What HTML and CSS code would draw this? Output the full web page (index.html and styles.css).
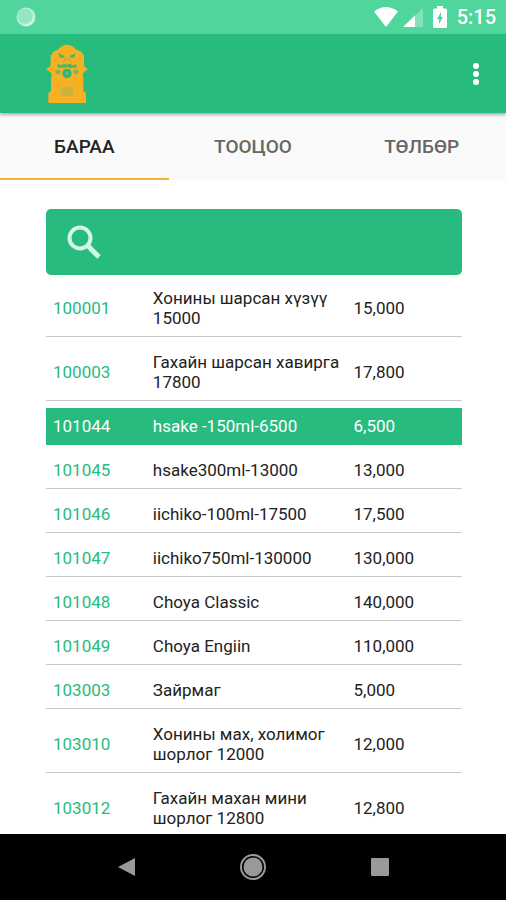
FILE: index.html
```html
<!DOCTYPE html>
<html lang="mn">
<head>
    <meta charset="UTF-8">
    <meta name="viewport" content="width=device-width, initial-scale=1.0">
    <title>Бараа</title>
    <link rel="stylesheet" href="styles.css">
</head>
<body>
    <!-- Status bar -->
    <div class="status-bar">
        <svg class="status-dot" width="20" height="20" viewBox="0 0 20 20">
            <circle cx="10" cy="10" r="9.5" fill="#fff" fill-opacity="0.6"/>
            <circle cx="9" cy="9" r="7.5" fill="#50d69c" fill-opacity="0.35"/>
            <path d="M18.500 8Q18 17 8 18.500A9.500 9.500 0 0 0 18.500 8z" fill="#fff" fill-opacity="0.8"/>
        </svg>
        <div class="status-icons">
            <svg width="26" height="22" viewBox="0 0 26 22">
                <path d="M1 5.500Q13-3.500 25 5.500L13 21z" fill="#fff"/>
            </svg>
            <svg width="20" height="22" viewBox="0 0 20 22">
                <path d="M0 21L20 2v19z" fill="#fff" fill-opacity="0.3"/>
                <path d="M0 21L12 9.500V21z" fill="#fff"/>
            </svg>
            <svg class="battery" width="14" height="22" viewBox="0 0 14 22">
                <path d="M4 2.500V0h6v2.500h2.500Q14 2.500 14 4v16.500q0 1.500-1.500 1.500h-11Q0 22 0 20.500V4Q0 2.500 1.500 2.500z" fill="#fff"/>
                <path d="M8 6v5h2L6 18v-5H4z" fill="#50d69c"/>
            </svg>
            <span class="time">5:15</span>
        </div>
    </div>

    <!-- App bar -->
    <header class="app-bar">
        <a href="#" class="logo" aria-label="Home">
            <svg width="42" height="62" viewBox="6 6 126 186">
                <path d="M28 32l14-6Q54 11 69 11t28 15l15 6 8 12v26l2 8 10 6-10 8-6 6 2 16v36l8 6v30H13v-30l8-6v-36l2-16-6-6-11-8 12-8 2-8V44z" fill="#f7b023"/>
                <g fill="#48b96c">
                    <path d="M42 36l20 9-4 5H48zM96 36l-20 9 4 5h10z"/>
                    <path d="M42 69l9 4 9-5 9 3 9-3 9 5 9-4 2 9-6 4-7-3-6 3-10-4-10 4-6-3-7 3-6-4z"/>
                </g>
                <path d="M66 48l-6 10 9-3 9 3-6-10M54 66l6-6M84 66l-6-6" fill="none" stroke="#b0b044" stroke-width="3"/>
                <g fill="#7cb65a">
                    <path d="M34 86h12l4 5-4 9H36zM104 86H92l-4 5 4 9h10z"/>
                </g>
                <circle cx="69" cy="97" r="14" fill="#27bb7d"/>
                <circle cx="69" cy="97" r="3.500" fill="#a9b548"/>
                <path d="M50 137h38v29H50z" fill="#d3b23c"/>
                <path d="M56 140v24M63 140v24M70 140v24M77 140v24M84 140v24" stroke="#bdb54a" stroke-width="3"/>
            </svg>
        </a>
        <button class="menu-btn" aria-label="Menu">
            <svg width="8" height="24" viewBox="0 0 8 24" fill="#fff">
                <circle cx="4" cy="4" r="3"/>
                <circle cx="4" cy="12" r="3"/>
                <circle cx="4" cy="20" r="3"/>
            </svg>
        </button>
    </header>

    <nav class="tabs">
        <a href="#products" class="active">БАРАА</a>
        <a href="#bill">ТООЦОО</a>
        <a href="#payment">ТӨЛБӨР</a>
    </nav>

    <!-- Product list -->
    <main class="content" id="products">
        <label class="search">
            <svg width="36" height="36" viewBox="0 0 36 36" fill="none" stroke="#d5f5e6">
                <circle cx="14" cy="14" r="10.500" stroke-width="4"/>
                <path d="M21.500 21.500L33 33" stroke-width="5"/>
            </svg>
            <input type="search" aria-label="Хайх">
        </label>

        <table class="products">
            <tbody>
                <tr><td class="code">100001</td><td class="name">Хонины шарсан хүзүү 15000</td><td class="price">15,000</td></tr>
                <tr><td class="code">100003</td><td class="name">Гахайн шарсан хавирга 17800</td><td class="price">17,800</td></tr>
                <tr class="selected"><td class="code">101044</td><td class="name">hsake -150ml-6500</td><td class="price">6,500</td></tr>
                <tr><td class="code">101045</td><td class="name">hsake300ml-13000</td><td class="price">13,000</td></tr>
                <tr><td class="code">101046</td><td class="name">iichiko-100ml-17500</td><td class="price">17,500</td></tr>
                <tr><td class="code">101047</td><td class="name">iichiko750ml-130000</td><td class="price">130,000</td></tr>
                <tr><td class="code">101048</td><td class="name">Choya Classic</td><td class="price">140,000</td></tr>
                <tr><td class="code">101049</td><td class="name">Choya Engiin</td><td class="price">110,000</td></tr>
                <tr><td class="code">103003</td><td class="name">Зайрмаг</td><td class="price">5,000</td></tr>
                <tr><td class="code">103010</td><td class="name">Хонины мах, холимог шорлог 12000</td><td class="price">12,000</td></tr>
                <tr><td class="code">103012</td><td class="name">Гахайн махан мини шорлог 12800</td><td class="price">12,800</td></tr>
            </tbody>
        </table>
    </main>

    <!-- System navigation -->
    <footer class="nav-bar">
        <button aria-label="Back">
            <svg width="26" height="26" viewBox="0 0 26 26"><path d="M4 13L21 4v18z" fill="#999"/></svg>
        </button>
        <button aria-label="Home">
            <svg width="26" height="26" viewBox="0 0 26 26">
                <circle cx="13" cy="13" r="12" fill="none" stroke="#999" stroke-width="2"/>
                <circle cx="13" cy="13" r="9.500" fill="#999"/>
            </svg>
        </button>
        <button aria-label="Recent apps">
            <svg width="26" height="26" viewBox="0 0 26 26"><rect x="4" y="4" width="18" height="18" rx="1" fill="#999"/></svg>
        </button>
    </footer>
</body>
</html>
```

FILE: styles.css
```css
/* General Styles */
* {
    box-sizing: border-box;
}

body {
    font-family: Roboto, "Noto Sans", sans-serif;
    margin: 0;
    height: 100vh;
    display: flex;
    flex-direction: column;
    background-color: white;
    color: #222;
}

svg {
    display: block;
}

button {
    display: flex;
    align-items: center;
    justify-content: center;
    background: none;
    border: none;
    padding: 0;
    cursor: pointer;
}

/* Status bar */
.status-bar {
    flex: none;
    height: 34px;
    display: flex;
    justify-content: space-between;
    align-items: center;
    padding: 0 10px 0 16px;
    background-color: #50d69c;
    color: white;
}

.status-icons {
    display: flex;
    align-items: center;
    gap: 4px;
}

.battery {
    margin: 0 6px;
}

.time {
    font-size: 20px;
    font-weight: 500;
    line-height: 24px;
}

/* App bar */
.app-bar {
    flex: none;
    height: 79px;
    display: flex;
    justify-content: space-between;
    align-items: center;
    padding: 0 16px 0 46px;
    background-color: #27bb7d;
    box-shadow: 0 2px 3px rgba(0, 0, 0, 0.3);
    z-index: 1;
}

.menu-btn {
    width: 28px;
    height: 40px;
}

/* Tabs */
.tabs {
    flex: none;
    display: flex;
    background-color: #fafafa;
}

.tabs a {
    flex: 1;
    height: 67px;
    border-bottom: 2px solid transparent;
    text-align: center;
    text-decoration: none;
    font-size: 19px;
    font-weight: 500;
    line-height: 68px;
    color: #666;
}

.tabs .active {
    color: #222;
    border-bottom-color: #f7b032;
}

/* Product list */
.content {
    flex: 1;
    min-height: 0;
    overflow: hidden;
    padding: 29px 44px 0 46px;
}

.search {
    display: flex;
    align-items: center;
    gap: 16px;
    height: 66px;
    padding: 0 20px;
    background-color: #27bb7d;
    border-radius: 5px;
}

.search input {
    flex: 1;
    min-width: 0;
    height: 40px;
    border: none;
    outline: none;
    background: none;
    color: white;
    font: inherit;
    font-size: 20px;
}

.products {
    width: 100%;
    margin-top: -2px;
    table-layout: fixed;
    border-collapse: separate;
    border-spacing: 0 7px;
    font-size: 17px;
    line-height: 20px;
}

.products td {
    padding: 8px 0 8px 7px;
    border-bottom: 1px solid #c8c8c8;
}

.products .code {
    width: 24%;
    color: #27bb7d;
}

.products .name {
    width: 48%;
}

.products .price {
    padding-left: 8px;
}

.products .selected td {
    background-color: #27bb7d;
    border-bottom-color: #27bb7d;
    color: white;
}

/* System navigation */
.nav-bar {
    flex: none;
    height: 66px;
    display: flex;
    justify-content: center;
    align-items: center;
    background-color: black;
}

.nav-bar button {
    width: 25%;
    height: 100%;
}
```
